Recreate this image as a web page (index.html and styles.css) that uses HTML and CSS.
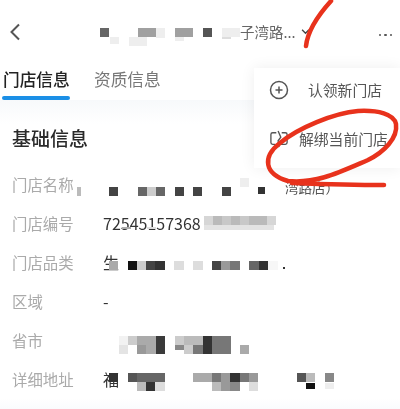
FILE: index.html
```html
<!DOCTYPE html>
<html lang="zh">
<head>
<meta charset="utf-8">
<title>门店信息</title>
<link rel="stylesheet" href="styles.css">
</head>
<body>
<div class="page">
  <header class="nav">
    <svg class="back" viewBox="0 0 12 18" width="12" height="18"><path d="M10 1.500 2.500 9l7.500 7.500" fill="none" stroke="#555" stroke-width="2"/></svg>
    <div class="title"><span class="title-text">子湾路...</span><svg class="chev" viewBox="0 0 10 7" width="9" height="6"><path d="M1 1l4 4 4-4" fill="none" stroke="#444" stroke-width="1.600"/></svg></div>
    <div class="more"><i></i><i></i><i></i></div>
  </header>
  <nav class="tabs">
    <div class="tab active">门店信息</div>
    <div class="tab">资质信息</div>
  </nav>
  <main class="card">
    <h2 class="heading">基础信息</h2>
    <dl class="rows">
      <div class="row"><dt>门店名称</dt><dd class="tail">湾路店）</dd></div>
      <div class="row"><dt>门店编号</dt><dd>72545157368</dd></div>
      <div class="row"><dt>门店品类</dt><dd>生</dd></div>
      <div class="row"><dt>区域</dt><dd>-</dd></div>
      <div class="row"><dt>省市</dt><dd></dd></div>
      <div class="row"><dt>详细地址</dt><dd>福</dd></div>
    </dl>
  </main>

  <aside class="menu">
    <div class="item first">
      <svg viewBox="0 0 20 20" width="20" height="20"><circle cx="10" cy="10" r="8.500" fill="none" stroke="#555" stroke-width="1.500"/><path d="M10 6.500v7M6.500 10h7" stroke="#555" stroke-width="1.500"/></svg>
      <span>认领新门店</span>
    </div>
    <div class="item second">
      <svg viewBox="0 0 20 20" width="20" height="18"><path d="M7 3H3a2 2 0 0 0-2 2v9a2 2 0 0 0 2 2h3M13 3h4a2 2 0 0 1 2 2v9a2 2 0 0 1-2 2h-5M9 1l3 7-3 4 1 7" fill="none" stroke="#555" stroke-width="1.500"/></svg>
      <span>解绑当前门店</span>
    </div>
  </aside>

  <svg class="overlay" viewBox="0 0 400 409" width="400" height="409" aria-hidden="true">
    <g fill="#666"><rect x="100" y="28" width="9" height="9"/><rect x="203" y="28" width="9" height="9" fill="#555"/></g>
    <g fill="#a0a0a0"><rect x="138" y="28" width="18" height="9"/><rect x="175" y="28" width="18" height="9"/></g>
    <g fill="#eee"><rect x="110" y="37" width="9" height="7"/><rect x="129" y="37" width="18" height="9"/><rect x="156" y="28" width="9" height="10"/><rect x="175" y="37" width="9" height="4"/><rect x="222" y="28" width="18" height="9"/><rect x="222" y="37" width="9" height="2" fill="#ddd"/></g>

    <g fill="#444"><rect x="109" y="187" width="9" height="9"/><rect x="175" y="187" width="9" height="9"/><rect x="193" y="187" width="9" height="9"/><rect x="222" y="187" width="9" height="9"/></g>
    <g fill="#666"><rect x="138" y="187" width="9" height="9"/><rect x="156" y="187" width="9" height="9"/></g>
    <rect x="147" y="187" width="9" height="9" fill="#ccc"/>
    <rect x="240" y="178" width="9" height="9" fill="#eee"/>
    <rect x="258" y="187" width="7" height="7" fill="#333"/>
    <rect x="77" y="187" width="4" height="9" fill="#bbb"/>

    <g fill="#ccc"><rect x="122" y="227" width="9" height="2" fill="#aaa"/><rect x="147" y="227" width="9" height="2" fill="#ddd"/></g>
    <g fill="#ccc" opacity=".8"><rect x="204" y="216" width="9" height="9"/><rect x="213" y="216" width="9" height="9" fill="#aaa"/><rect x="222" y="216" width="9" height="9" fill="#bbb"/><rect x="231" y="216" width="9" height="9" fill="#aaa"/><rect x="240" y="216" width="9" height="9" fill="#bbb"/><rect x="249" y="216" width="9" height="9" fill="#aaa"/><rect x="258" y="216" width="9" height="9" fill="#aaa"/><rect x="267" y="216" width="9" height="9"/><rect x="204" y="225" width="70" height="5" fill="#ddd"/></g>

    <rect x="109" y="261" width="9" height="9" fill="#aaa"/>
    <rect x="128" y="261" width="9" height="9" fill="#111"/>
    <rect x="137" y="261" width="9" height="9" fill="#ccc"/>
    <rect x="146" y="261" width="9" height="9" fill="#444"/>
    <rect x="155" y="261" width="10" height="9" fill="#333"/>
    <rect x="174" y="261" width="10" height="9" fill="#ddd"/>
    <rect x="193" y="261" width="10" height="9" fill="#ddd"/>
    <rect x="212" y="261" width="9" height="9" fill="#444"/>
    <rect x="221" y="261" width="9" height="9" fill="#999"/>
    <rect x="230" y="261" width="10" height="9" fill="#777"/>
    <rect x="249" y="261" width="10" height="9" fill="#666"/>
    <rect x="259" y="261" width="9" height="9" fill="#333"/>
    <rect x="268" y="261" width="10" height="9" fill="#f7f7f7"/>
    <rect x="283" y="267" width="2" height="2" fill="#333"/>

    <rect x="119" y="336" width="9" height="9" fill="#f2f2f2"/>
    <rect x="128" y="336" width="9" height="9" fill="#ccc"/>
    <rect x="137" y="336" width="19" height="9" fill="#aaa"/>
    <rect x="156" y="336" width="9" height="18" fill="#3a3a3a"/>
    <rect x="119" y="345" width="9" height="9" fill="#e4e4e4"/>
    <rect x="137" y="345" width="9" height="9" fill="#999"/>
    <rect x="146" y="345" width="10" height="9" fill="#aaa"/>
    <rect x="175" y="336" width="9" height="9" fill="#ccc"/>
    <rect x="184" y="336" width="19" height="9" fill="#bbb"/>
    <rect x="175" y="345" width="9" height="5" fill="#888"/>
    <rect x="184" y="345" width="9" height="9" fill="#ccc"/>
    <rect x="193" y="345" width="10" height="9" fill="#777"/>
    <rect x="203" y="336" width="9" height="18" fill="#333"/>
    <rect x="212" y="336" width="19" height="18" fill="#777"/>
    <rect x="240" y="345" width="9" height="9" fill="#aaa"/>

    <rect x="109" y="373" width="9" height="9" fill="#333"/>
    <rect x="128" y="373" width="9" height="9" fill="#555"/>
    <rect x="137" y="373" width="9" height="9" fill="#666"/>
    <rect x="146" y="373" width="9" height="9" fill="#666"/>
    <rect x="155" y="373" width="10" height="9" fill="#666"/>
    <rect x="137" y="382" width="9" height="9" fill="#bbb"/>
    <rect x="146" y="382" width="9" height="9" fill="#333"/>
    <rect x="155" y="382" width="10" height="9" fill="#ddd"/>
    <rect x="193" y="373" width="19" height="9" fill="#aaa"/>
    <rect x="212" y="373" width="9" height="9" fill="#777"/>
    <rect x="221" y="373" width="9" height="18" fill="#999"/>
    <rect x="230" y="373" width="10" height="9" fill="#333"/>
    <rect x="240" y="373" width="9" height="9" fill="#777"/>
    <rect x="249" y="373" width="9" height="9" fill="#999"/>
    <rect x="212" y="382" width="9" height="9" fill="#bbb"/>
    <rect x="230" y="382" width="10" height="9" fill="#888"/>
    <rect x="249" y="382" width="9" height="9" fill="#ddd"/>
    <rect x="297" y="373" width="9" height="9" fill="#555"/>
    <rect x="306" y="373" width="9" height="9" fill="#bbb"/>
    <rect x="306" y="383" width="9" height="6" fill="#111"/>
    <rect x="325" y="373" width="9" height="9" fill="#888"/>
    <rect x="325" y="383" width="9" height="6" fill="#eee"/>

    <g fill="none" stroke="#e8321c" stroke-linecap="round" stroke-linejoin="round">
      <path d="M331 1C321 12 308 28 306 46" stroke-width="4.500"/>
      <path d="M396 124C394 114 378 110 358 111 334 113 298 128 280 143 262 157 264 174 288 181 316 184 340 172 368 160 384 152 398 138 396 124Z" stroke-width="4.500"/>
      <path d="M292 183C320 184 352 185 384 185" stroke-width="4.500"/>
    </g>
  </svg>
</div>
</body>
</html>
```
FILE: styles.css
```css
* { box-sizing: border-box; margin: 0; padding: 0; }
html, body { width: 400px; height: 409px; overflow: hidden; background: #fff; }
body { font-family: "Noto Sans CJK SC", "Noto Sans", sans-serif; }

.page { position: relative; width: 400px; height: 409px; overflow: hidden; filter: blur(0.45px); }

.nav { display: flex; align-items: center; height: 62px; padding: 1px 8px 0 9px; }
.back { flex: none; }
.title { display: flex; align-items: center; margin-left: 219px; gap: 5px; }
.title-text { font-size: 14.500px; color: #666; white-space: nowrap; }
.chev { flex: none; }
.more { display: flex; gap: 3px; margin-left: auto; padding-top: 7px; }
.more i { width: 2.500px; height: 2.500px; border-radius: 50%; background: #555; }

.tabs { display: flex; gap: 24px; height: 38px; padding-left: 3px; }
.tab { font-size: 16.700px; line-height: 34px; color: #777; width: 67px; white-space: nowrap; }
.tab.active { color: #222; font-weight: 500; position: relative; }
.tab.active::after { content: ""; position: absolute; left: -1px; right: 0; bottom: 0; height: 4px; border-radius: 2px; background: #1b8fe6; }

.card { height: 309px; padding: 0 12px; background: linear-gradient(#f7f9fb, #fff 24px, #fff 298px, #fafbfd); }
.heading { font-size: 19px; font-weight: 500; color: #2a2a2a; line-height: 28px; padding-top: 24px; height: 52px; }
.rows { margin-top: 12px; }
.row { display: flex; height: 39px; align-items: center; }
dt { width: 91px; flex: none; font-size: 15.400px; color: #aaa; }
dd { font-size: 16px; color: #333; white-space: nowrap; }
.tail { margin-left: 182px; color: #555; font-size: 13.500px; padding-top: 7px; }

.menu { position: absolute; left: 254px; top: 68px; width: 146px; height: 100px; background: #fff; box-shadow: 0 0 14px rgba(0, 0, 0, 0.07); color: #555; font-size: 14.800px; }
.item { position: absolute; display: flex; align-items: center; white-space: nowrap; }
.first { left: 15px; top: 11px; gap: 19px; }
.second { left: 15px; top: 60px; gap: 10px; }

.overlay { position: absolute; left: 0; top: 0; }
```
